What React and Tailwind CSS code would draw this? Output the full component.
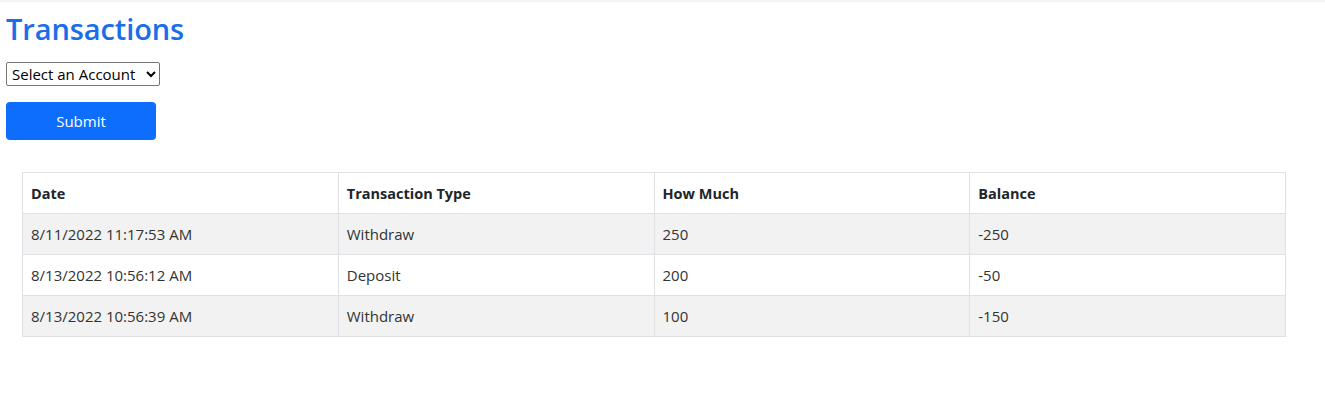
import React, { useState } from 'react';

const rows = [
  { date: '8/11/2022 11:17:53 AM', type: 'Withdraw', amount: '250', balance: '-250' },
  { date: '8/13/2022 10:56:12 AM', type: 'Deposit', amount: '200', balance: '-50' },
  { date: '8/13/2022 10:56:39 AM', type: 'Withdraw', amount: '100', balance: '-150' },
];

export default function App() {
  const [account, setAccount] = useState('');

  return (
    <div className="min-h-[420px] bg-white font-['Open_Sans',sans-serif] text-[#212529] border-t-2 border-[#f4f4f4] px-[6px]">
      <h1 className="text-[29px] leading-[38px] font-semibold text-[#1a6ee8] pt-[8px] tracking-[-0.1px]">Transactions</h1>
      <div className="mt-[14px]">
        <select
          value={account}
          onChange={(e) => setAccount(e.target.value)}
          className="h-[24px] w-[154px] border border-[#767676] rounded-[2px] text-[15px] leading-[20px] text-black pl-[1px] bg-white"
        >
          <option value="">Select an Account</option>
        </select>
      </div>
      <button className="mt-[16px] w-[150px] h-[38px] rounded-[4px] bg-[#0d6efd] text-white text-[15px]">Submit</button>

      <table className="mt-[32px] ml-[16px] w-[1264px] table-fixed border-collapse text-[15px]">
        <thead>
          <tr className="h-[41px]">
            <th className="border border-[#dee2e6] text-left font-bold px-[8px] pt-[2px] text-[14.5px] text-[#212529]">Date</th>
            <th className="border border-[#dee2e6] text-left font-bold px-[8px] pt-[2px] text-[14.5px] text-[#212529]">Transaction Type</th>
            <th className="border border-[#dee2e6] text-left font-bold px-[8px] pt-[2px] text-[14.5px] text-[#212529]">How Much</th>
            <th className="border border-[#dee2e6] text-left font-bold px-[8px] pt-[2px] text-[14.5px] text-[#212529]">Balance</th>
          </tr>
        </thead>
        <tbody className="text-[#333]">
          {rows.map((r, i) => (
            <tr key={i} className={'h-[41px] ' + (i % 2 === 0 ? 'bg-[#f2f2f2]' : 'bg-white')}>
              <td className="border border-[#dee2e6] px-[8px]">{r.date}</td>
              <td className="border border-[#dee2e6] px-[8px]">{r.type}</td>
              <td className="border border-[#dee2e6] px-[8px]">{r.amount}</td>
              <td className="border border-[#dee2e6] px-[8px]">{r.balance}</td>
            </tr>
          ))}
        </tbody>
      </table>
    </div>
  );
}
